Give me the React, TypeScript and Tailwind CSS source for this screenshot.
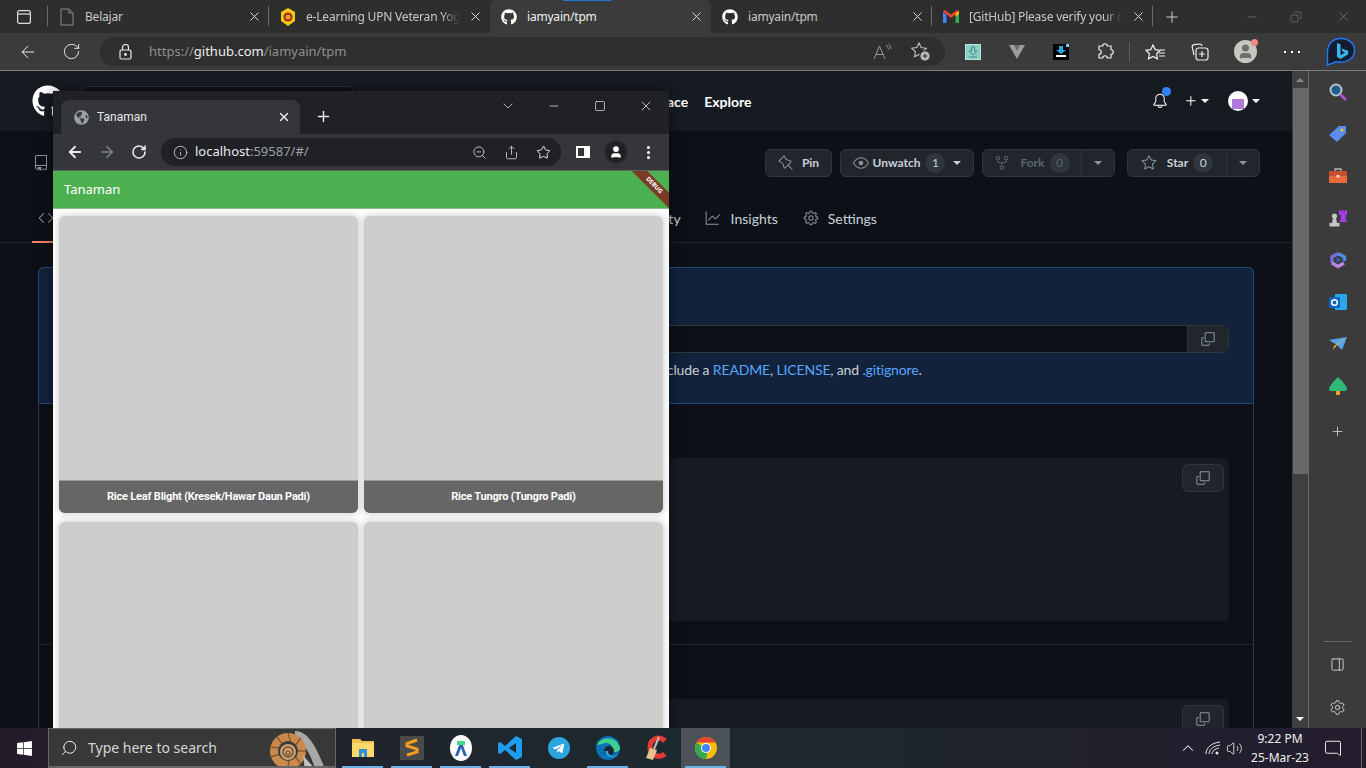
import type { ReactNode } from "react";
import {
  ArrowLeft,
  ArrowRight,
  ChevronDown,
  ChevronUp,
  Info,
  Minus,
  Plus,
  RotateCw,
  Search,
  Share,
  Square,
  Star,
  User,
  Volume2,
  X,
  ZoomOut,
  Settings as Cog,
  Copy,
  MessageSquare,
  PanelRight,
} from "lucide-react";
import { FaWindows, FaTelegramPlane, FaGithub, FaGlobeAmericas } from "react-icons/fa";
import {
  GoBell,
  GoCode,
  GoCopy,
  GoEye,
  GoGear,
  GoGraph,
  GoPin,
  GoPlus,
  GoRepo,
  GoRepoForked,
  GoStar,
} from "react-icons/go";

const STAR_PATH = "M8 1l2.2 4.6 5 .7-3.6 3.5.9 5L8 12.4 3.5 14.8l.9-5L.8 6.3l5-.7z";

function Caret({ className = "" }: { className?: string }) {
  return <span className={`inline-block w-0 h-0 border-x-[4px] border-x-transparent border-t-[4px] border-t-current ${className}`} />;
}

function GmailIcon() {
  return (
    <svg width="16" height="13" viewBox="0 0 16 13">
      <path d="M0 2v11h3.5V5z" fill="#4285f4" />
      <path d="M16 2v11h-3.5V5z" fill="#34a853" />
      <path d="M0 1.5 L8 8 L16 1.5 L14 0 L8 4.5 L2 0 Z" fill="#ea4335" />
      <path d="M12.5 3.5 L16 1 V4 L12.5 6.5z" fill="#fbbc04" />
    </svg>
  );
}

function UpnIcon() {
  return (
    <svg width="16" height="18" viewBox="0 0 16 18">
      <path d="M8 0 L15 4 V13 L8 18 L1 13 V4Z" fill="#f2c811" />
      <circle cx="8" cy="9" r="4.5" fill="#a3261f" />
      <circle cx="8" cy="9" r="2.5" fill="#d9a520" />
    </svg>
  );
}

function Tab({
  icon,
  title,
  active,
  fade,
  sep = true,
}: {
  icon: ReactNode;
  title: string;
  active?: boolean;
  fade?: boolean;
  sep?: boolean;
}) {
  return (
    <div className={`relative w-[221px] h-[33px] flex items-center pl-[11px] pr-[7px] ${active ? "bg-[#3b3b3b] rounded-t-md" : ""}`}>
      <span className="w-[16px] flex justify-center">{icon}</span>
      <span
        className={`ml-[10px] flex-1 overflow-hidden whitespace-nowrap text-[12px] tracking-[-0.2px] ${active ? "text-[#f0f0f0]" : "text-[#c8c8c8]"} ${
          fade ? "[mask-image:linear-gradient(to_right,black_88%,transparent)]" : ""
        }`}
      >
        {title}
      </span>
      <X size={15} strokeWidth={1.5} className="ml-2 text-[#e0e0e0]" />
      {sep && <span className="absolute right-0 top-[6px] h-[20px] w-px bg-[#6a6a6a]" />}
    </div>
  );
}

function TabStrip() {
  return (
    <div className="relative h-[33px] shrink-0 flex bg-[#2e2e2e]">
      <div className="w-[48px] flex items-center pl-[17px] relative">
        <svg width="14" height="14" viewBox="0 0 14 14" fill="none" stroke="#e0e0e0" strokeWidth="1.2">
          <rect x="0.6" y="0.6" width="12.8" height="12.8" rx="2" />
          <path d="M0.6 4h12.8" />
        </svg>
        <span className="absolute right-0 top-[6px] h-[20px] w-px bg-[#6a6a6a]" />
      </div>
      <Tab
        title="Belajar"
        icon={
          <svg width="14" height="18" viewBox="0 0 14 18" fill="none" stroke="#8a8a8a">
            <path d="M1 1h8l4 4v12H1z M9 1v4h4" />
          </svg>
        }
      />
      <Tab title="e-Learning UPN Veteran Yogyakarta" fade icon={<UpnIcon />} sep={false} />
      <Tab title="iamyain/tpm" active sep={false} icon={<FaGithub size={16} className="text-white" />} />
      <Tab title="iamyain/tpm" icon={<FaGithub size={16} className="text-white" />} />
      <Tab title="[GitHub] Please verify your device" fade icon={<GmailIcon />} />
      <div className="flex items-center pl-[10px] text-[#e0e0e0]">
        <Plus size={18} strokeWidth={1.2} />
      </div>
      <div className="flex-1 flex items-center justify-end text-[#8f8f8f]">
        <Minus size={14} strokeWidth={1} className="mr-[31px]" />
        <Copy size={12} strokeWidth={1} className="mr-[34px] -scale-x-100" />
        <X size={15} strokeWidth={1} className="mr-[15px]" />
      </div>
      <span className="absolute left-[563px] top-0 w-[48px] h-px bg-[#1e78d6]" />
    </div>
  );
}

function EdgeToolbar() {
  return (
    <div className="h-[38px] shrink-0 flex items-center bg-[#3b3b3b] border-b border-[#7d7d7d] text-[#ececec]">
      <div className="w-[100px] flex items-center pl-[18px] gap-[24px]">
        <ArrowLeft size={20} strokeWidth={1.2} />
        <RotateCw size={19} strokeWidth={1.2} />
      </div>
      <div className="w-[845px] h-[29px] rounded-full bg-[#2f2f2f] flex items-center pl-[19px] pr-[14px]">
        <svg width="13" height="16" viewBox="0 0 13 16" fill="none" stroke="#ececec" strokeWidth="1.2">
          <rect x="1" y="6" width="11" height="9" rx="1.5" />
          <path d="M3.5 6V3.5a3 3 0 0 1 6 0V6" />
          <circle cx="6.5" cy="10.5" r="0.8" fill="#ececec" />
        </svg>
        <span className="ml-[17px] flex-1 text-[13px] text-[#8f8f8f]">
          https://<span className="text-[#ececec]">github.com</span>/iamyain/tpm
        </span>
        <svg width="20" height="18" viewBox="0 0 20 18" fill="none" stroke="#9a9a9a" strokeWidth="1" className="mr-[18px]">
          <path d="M1 16 L6.5 3 L12 16 M3 11.5h7" />
          <path d="M13 2c1.5 1 2.5 2.5 2.5 4.5 M15.5 1c1.5 1 2.5 3 2.5 5" />
        </svg>
        <svg width="20" height="19" viewBox="0 0 20 19" fill="none" stroke="#c0c0c0" strokeWidth="1.1">
          <path d={STAR_PATH} />
          <circle cx="14" cy="14" r="5.2" fill="#c0c0c0" stroke="#2f2f2f" strokeWidth="1.2" />
          <path d="M14 11.5v5 M11.5 14h5" stroke="#2f2f2f" />
        </svg>
      </div>
      <div className="flex items-center">
        <span className="ml-[20px] w-[16px] h-[16px] bg-[#8ccfc0] border border-[#b6e3d8] flex items-center justify-center">
          <svg width="10" height="12" viewBox="0 0 10 12" fill="none" stroke="#3c8d99">
            <path d="M3.5 1h3v4H9L5 9 1 5h2.5z M1 11h8" />
          </svg>
        </span>
        <svg width="16" height="14" viewBox="0 0 16 14" className="ml-[28px]">
          <path d="M0 0h16L8 14z" fill="#9d9d9d" />
          <path d="M5 0h6L8 6z" fill="#6b6b6b" />
        </svg>
        <span className="relative ml-[28px] w-[16px] h-[16px] bg-black flex items-center justify-center">
          <svg width="10" height="12" viewBox="0 0 10 12">
            <path d="M3 0h4v4h3L5 8 0 4h3z" fill="#2fa8ea" />
            <path d="M0 9h10v2H0z" fill="#fff" />
          </svg>
          <span className="absolute right-0 top-0 w-[3px] h-[3px] bg-[#7cc8f8]" />
        </span>
        <svg width="18" height="18" viewBox="0 0 24 24" fill="none" stroke="#ececec" strokeWidth="1.6" className="ml-[27px]">
          <path d="M9 4a3 3 0 0 1 6 0h5v5a3 3 0 0 1 0 6v5h-5a3 3 0 0 0-6 0H4v-5a3 3 0 0 0 0-6V4z" />
        </svg>
        <span className="ml-[15px] w-px h-[20px] bg-[#5f5f5f]" />
        <svg width="20" height="16" viewBox="0 0 20 16" fill="none" stroke="#ececec" strokeWidth="1.2" className="ml-[15px]">
          <path d={STAR_PATH} />
          <path d="M15 6h5 M14 9h6 M14 12h6" />
        </svg>
        <svg width="18" height="18" viewBox="0 0 18 18" fill="none" stroke="#ececec" strokeWidth="1.2" className="ml-[26px]">
          <path d="M3 12 L1.2 4 Q1 2 3 1.6 L9 1 Q10.5 1 11 3" />
          <rect x="5" y="5" width="12" height="12" rx="2.5" />
          <path d="M11 8v6 M8 11h6" />
        </svg>
        <span className="relative ml-[25px] w-[23px] h-[23px] rounded-full overflow-visible bg-[#c9c6c0] flex items-center justify-center">
          <User size={17} className="text-[#6f6f6f]" fill="#6f6f6f" />
          <span className="absolute -right-[1px] -top-[1px] w-[7px] h-[7px] rounded-full bg-[#f08a80]" />
        </span>
        <span className="ml-[27px] w-[16px] flex justify-between">
          <i className="w-[2px] h-[2px] bg-white" />
          <i className="w-[2px] h-[2px] bg-white" />
          <i className="w-[2px] h-[2px] bg-white" />
        </span>
        <svg width="30" height="30" viewBox="0 0 30 30" fill="none" className="ml-[26px]">
          <path d="M15 1.5C7 1.5 1.5 7 1.5 15v13l8-3h5.5c8 0 13.5-5 13.5-11.5S23 1.5 15 1.5z" fill="#141c2e" stroke="#1e78ff" strokeWidth="1.4" />
          <path d="M11 6l3.5 1.2v11l4.5-2.6-2.4-1.2-1.2-3 6.8 2.4v3.4L14.5 22 11 20z" fill="#37b5f0" />
        </svg>
      </div>
    </div>
  );
}

function RepoButton({
  icon,
  label,
  count,
  split,
  dim,
  w,
  gap = "gap-[8px]",
  caret,
}: {
  icon: ReactNode;
  label: string;
  count?: string;
  split?: boolean;
  dim?: boolean;
  w: string;
  gap?: string;
  caret?: boolean;
}) {
  return (
    <div className={`h-[28px] ${w} flex items-center rounded-md border border-[#30363d] bg-[#21262d] text-[12px] font-bold ${dim ? "text-[#5c636b]" : "text-[#c9d1d9]"}`}>
      <div className="flex-1 flex items-center justify-center">
        <span className={`flex items-center ${gap}`}>
          {icon}
          <span>{label}</span>
        </span>
        {count && (
          <span className="ml-[5px] w-[20px] h-[20px] rounded-full bg-[#30363d] flex items-center justify-center font-normal">{count}</span>
        )}
        {caret && <Caret className="ml-[8px] text-[#c9d1d9]" />}
      </div>
      {split && (
        <div className="w-[33px] h-full border-l border-[#30363d] flex items-center justify-center text-[#8b949e]">
          <Caret />
        </div>
      )}
    </div>
  );
}

function GithubPage() {
  return (
    <div className="flex-1 min-w-0 bg-[#0d1117] font-[Lato,sans-serif]">
      <header className="h-[60px] bg-[#161b22] flex items-center pl-[32px] pr-[32px] text-white">
        <FaGithub size={32} />
        <div className="ml-[18px] w-[272px] h-[30px] rounded-md border border-[#30363d] bg-[#0d1117]" />
        <span className="ml-[313px] text-[14px] font-bold">ace</span>
        <span className="ml-[16px] text-[14px] font-bold">Explore</span>
        <div className="flex-1" />
        <span className="relative">
          <GoBell size={16} />
          <span className="absolute -top-[6px] right-[-3px] w-[9px] h-[9px] rounded-full bg-[#2f81f7]" />
        </span>
        <GoPlus size={16} className="ml-[15px]" />
        <Caret className="ml-[2px]" />
        <span className="ml-[19px] w-[20px] h-[20px] rounded-full bg-white flex items-end justify-center pb-[2px]">
          <span className="w-[12px] h-[10px] bg-[#b07ad8]" />
        </span>
        <Caret className="ml-[4px]" />
      </header>

      <div className="h-[112px] border-b border-[#21262d] relative">
        <div className="flex items-center h-[60px] pl-[33px] pr-[32px] pt-[4px]">
          <GoRepo size={16} className="text-[#8b949e]" />
          <div className="flex-1" />
          <div className="flex items-center gap-[8px]">
            <RepoButton w="w-[67px]" icon={<GoPin size={16} className="text-[#8b949e]" />} label="Pin" />
            <RepoButton w="w-[134px]" gap="gap-[4px]" caret icon={<GoEye size={16} className="text-[#8b949e]" />} label="Unwatch" count="1" />
            <RepoButton w="w-[133px]" gap="gap-[10px]" dim split icon={<GoRepoForked size={16} />} label="Fork" count="0" />
            <div className="ml-[4px]">
              <RepoButton w="w-[133px]" gap="gap-[10px]" split icon={<GoStar size={16} className="text-[#8b949e]" />} label="Star" count="0" />
            </div>
          </div>
        </div>
        <div className="flex items-center h-[32px] mt-[11px] text-[14px] text-[#c9d1d9]">
          <GoCode size={16} className="ml-[38px] text-[#8b949e]" />
          <span className="ml-[611px]">ity</span>
          <GoGraph size={16} className="ml-[24px] text-[#8b949e]" />
          <span className="ml-[10px]">Insights</span>
          <GoGear size={16} className="ml-[25px] text-[#8b949e]" />
          <span className="ml-[9px]">Settings</span>
        </div>
        <span className="absolute left-[32px] bottom-[-1px] w-[30px] h-[2px] bg-[#f78166]" />
      </div>

      <div className="mx-[38px] mt-[24px] border-x border-[#30363d] rounded-t-md">
        <section className="h-[137px] bg-[#12223a] border border-[#1f4a7d] -mx-px rounded-t-md pt-[57px] pr-[24px] pl-[600px]">
          <div className="h-[28px] flex border border-[#30363d] rounded-md bg-[#0d1117]">
            <div className="flex-1" />
            <div className="w-[41px] bg-[#21262d] border-l border-[#30363d] rounded-r-md flex items-center justify-center text-[#8b949e]">
              <GoCopy size={16} />
            </div>
          </div>
          <p className="mt-[6px] ml-[17px] text-[14px] tracking-[-0.15px] text-[#c9d1d9] whitespace-nowrap">
            include a <span className="text-[#58a6ff]">README</span>, <span className="text-[#58a6ff]">LICENSE</span>, and{" "}
            <span className="text-[#58a6ff]">.gitignore</span>.
          </p>
        </section>

        <section className="h-[241px] border-b border-[#21262d] pt-[54px] pr-[24px] pl-[600px]">
          <div className="h-[163px] bg-[#161b22] rounded-md pt-[6px] pr-[5px] flex justify-end">
            <CopyBox />
          </div>
        </section>

        <section className="pt-[54px] pr-[24px] pl-[600px]">
          <div className="h-[60px] bg-[#161b22] rounded-md pt-[6px] pr-[5px] flex justify-end">
            <CopyBox />
          </div>
        </section>
      </div>
    </div>
  );
}

function CopyBox() {
  return (
    <div className="w-[42px] h-[28px] rounded-md border border-[#30363d] bg-[#21262d] flex items-center justify-center text-[#8b949e]">
      <GoCopy size={16} />
    </div>
  );
}

function Scrollbar() {
  return (
    <div className="w-[17px] bg-[#3f3f3f] border-r border-[#6a6a6a] flex flex-col items-center">
      <div className="h-[17px] flex items-center justify-center text-[#8a8a8a]">
        <Caret className="rotate-180" />
      </div>
      <div className="w-[15px] h-[386px] bg-[#686868]" />
      <div className="flex-1" />
      <div className="h-[18px] flex items-center justify-center text-white">
        <Caret />
      </div>
    </div>
  );
}

function SidebarIcon({ children }: { children: ReactNode }) {
  return <div className="h-[42px] flex items-center justify-center">{children}</div>;
}

function EdgeSidebar() {
  return (
    <div className="w-[57px] bg-[#3b3b3b] flex flex-col">
      <div>
        <SidebarIcon>
          <svg width="18" height="18" viewBox="0 0 18 18" fill="none">
            <circle cx="7" cy="7" r="5.5" fill="#1d5f8a" stroke="#b8c4cc" strokeWidth="2" />
            <path d="M11.5 11.5 L17 17" stroke="#c050d8" strokeWidth="2.5" />
          </svg>
        </SidebarIcon>
        <SidebarIcon>
          <svg width="18" height="18" viewBox="0 0 18 18">
            <path d="M0 10 L10 1 H17 V8 L8 17z" fill="#5a8cf0" />
            <circle cx="13" cy="5" r="1.6" fill="#f5c518" />
          </svg>
        </SidebarIcon>
        <SidebarIcon>
          <svg width="18" height="16" viewBox="0 0 18 16">
            <path d="M6 3V1h6v2" fill="none" stroke="#b8b8b8" strokeWidth="1.3" />
            <rect y="3" width="18" height="5" fill="#c8502e" />
            <rect y="8" width="18" height="7" fill="#e8693a" />
            <rect x="7.5" y="7" width="3" height="2.5" fill="#dedede" />
          </svg>
        </SidebarIcon>
        <SidebarIcon>
          <svg width="18" height="18" viewBox="0 0 18 18">
            <circle cx="5.5" cy="7" r="2.6" fill="#c4c4c4" />
            <path d="M4 9h3l1 5H3z M0.5 14h10v3.5H0.5z" fill="#c4c4c4" />
            <path d="M10 1h1.6v1.6h1.5V1h1.6v1.6h1.5V1H18v5h-1.5l.5 6H19v1H10v-1h1.5l.5-6h-2z" fill="#a83cf0" />
          </svg>
        </SidebarIcon>
        <SidebarIcon>
          <svg width="18" height="18" viewBox="0 0 18 18" fill="none" strokeWidth="3.4">
            <path d="M3 12 V6 L9 2.5" stroke="#7a6cd8" />
            <path d="M9 2.5 L15.5 6 V10" stroke="#4a8fe0" />
            <path d="M15 12 L9 15.5 L3 12" stroke="#b58ae0" />
            <path d="M7.5 6.5 L12.5 9 L7.5 11.5z" fill="#3f5fc8" stroke="none" />
          </svg>
        </SidebarIcon>
        <SidebarIcon>
          <svg width="18" height="18" viewBox="0 0 18 18">
            <rect x="6" y="1" width="12" height="16" rx="1" fill="#28a8ea" />
            <rect x="0" y="4" width="11" height="11" rx="1" fill="#0a66c2" />
            <circle cx="5.5" cy="9.5" r="2.8" fill="none" stroke="#fff" strokeWidth="1.5" />
          </svg>
        </SidebarIcon>
        <SidebarIcon>
          <svg width="18" height="14" viewBox="0 0 18 14">
            <path d="M0 3 L18 0 L13 13 L8 8z" fill="#54a6e8" />
            <path d="M18 0 L5 9 L4 13 L8 8z" fill="#f0b429" />
          </svg>
        </SidebarIcon>
        <SidebarIcon>
          <svg width="18" height="18" viewBox="0 0 18 18">
            <path d="M9 0 C12 3 18 9 18 12 Q18 14 15 14 H3 Q0 14 0 12 C0 9 6 3 9 0z" fill="#2fb878" />
            <rect x="7" y="14" width="4" height="4" fill="#f0a020" />
          </svg>
        </SidebarIcon>
        <div className="h-[48px] flex items-center justify-center text-[#e0e0e0]">
          <Plus size={15} strokeWidth={1.2} />
        </div>
      </div>
      <div className="flex-1" />
      <div className="mx-[14px] h-px bg-[#666]" />
      <div className="h-[44px] flex items-center justify-center text-[#e6e6e6]">
        <PanelRight size={15} strokeWidth={1.3} className="mt-[1px]" />
      </div>
      <div className="h-[42px] flex items-center justify-center text-[#e6e6e6]">
        <Cog size={17} strokeWidth={1.2} />
      </div>
    </div>
  );
}

function MiniTile({ title }: { title?: string }) {
  return (
    <div className="h-[297px] rounded-[6px] bg-[#cdcdcd] shadow-[0_0_6px_2px_rgba(0,0,0,0.14)] overflow-hidden flex flex-col">
      <div className="flex-1" />
      {title && (
        <div className="h-[33px] bg-[#666666] border-t border-[#9a9a9a] flex items-center justify-center text-[11px] font-bold text-white tracking-[-0.2px]">
          {title}
        </div>
      )}
    </div>
  );
}

function ChromeWindow() {
  return (
    <div className="absolute left-[53px] top-[20px] w-[616px] h-[660px] flex flex-col font-['Noto_Sans',sans-serif] shadow-[0_0_12px_rgba(0,0,0,0.5)]">
      <div className="h-[43px] shrink-0 bg-[#202124] flex text-[#e8eaed]">
        <div className="self-end ml-[8px] w-[239px] h-[34px] bg-[#35363a] rounded-t-lg flex items-center pl-[13px] pr-[9px]">
          <FaGlobeAmericas size={15} className="text-[#9aa0a6]" />
          <span className="ml-[8px] flex-1 text-[12px] font-[Roboto,sans-serif]">Tanaman</span>
          <X size={14} strokeWidth={2.5} />
        </div>
        <Plus size={17} strokeWidth={2} className="self-end ml-[15px] mb-[9px]" />
        <div className="flex-1" />
        <div className="flex items-center h-[29px]">
          <span className="w-[46px] flex justify-center"><ChevronDown size={16} strokeWidth={1.1} /></span>
          <span className="w-[46px] flex justify-center"><Minus size={14} strokeWidth={1.2} /></span>
          <span className="w-[46px] flex justify-center"><Square size={12} strokeWidth={1.4} /></span>
          <span className="w-[46px] flex justify-center"><X size={16} strokeWidth={1.2} /></span>
        </div>
      </div>
      <div className="h-[37px] shrink-0 bg-[#35363a] flex items-center border-b border-[#5f6368] text-[#e8eaed]">
        <ArrowLeft size={18} strokeWidth={2.4} className="ml-[13px]" />
        <ArrowRight size={18} strokeWidth={2} className="ml-[14px] text-[#80868b]" />
        <RotateCw size={16} strokeWidth={2.4} className="ml-[15px]" />
        <div className="ml-[14px] w-[400px] h-[28px] rounded-full bg-[#202124] flex items-center pl-[12px] pr-[10px]">
          <Info size={15} strokeWidth={1.5} className="text-[#bdc1c6]" />
          <span className="ml-[7px] flex-1 text-[13px] text-[#9aa0a6]">
            <span className="text-[#e8eaed]">localhost</span>:59587/#/
          </span>
          <ZoomOut size={15} strokeWidth={1.5} className="text-[#bdc1c6]" />
          <Share size={15} strokeWidth={1.5} className="ml-[17px] text-[#bdc1c6]" />
          <Star size={15} strokeWidth={1.6} className="ml-[17px]" />
        </div>
        <span className="ml-[15px] w-[14px] h-[12px] border-2 border-white border-r-[6px]" />
        <span className="ml-[15px] w-[22px] h-[22px] rounded-full bg-[#202124] flex items-center justify-center">
          <User size={14} fill="white" className="text-white" />
        </span>
        <span className="ml-[20px] flex flex-col gap-[2px]">
          <i className="w-[3px] h-[3px] rounded-full bg-white" />
          <i className="w-[3px] h-[3px] rounded-full bg-white" />
          <i className="w-[3px] h-[3px] rounded-full bg-white" />
        </span>
      </div>
      <div className="relative h-[38px] shrink-0 bg-[#4caf50] border-b border-[#8fb590] flex items-center pl-[11px] pt-[1px] text-[13px] text-white overflow-hidden">
        Tanaman
        <div className="absolute right-[-25px] top-[9px] w-[80px] h-[11px] bg-[#7a3b26] rotate-45 flex items-center justify-center text-[6px] font-bold text-white">
          DEBUG
        </div>
      </div>
      <div className="flex-1 min-h-0 overflow-hidden bg-white px-[6px] pt-[7px] grid grid-cols-2 gap-x-[6px] gap-y-[9px] content-start font-[Roboto,sans-serif]">
        <MiniTile title="Rice Leaf Blight (Kresek/Hawar Daun Padi)" />
        <MiniTile title="Rice Tungro (Tungro Padi)" />
        <MiniTile />
        <MiniTile />
      </div>
    </div>
  );
}

function Shell() {
  return (
    <svg width="62" height="40" viewBox="0 0 62 40" fill="none" className="absolute left-[216px] top-0">
      <path d="M30 2 C44 2 52 20 60 40 H50 C46 26 40 14 30 12z" fill="#a8a8a8" />
      <circle cx="23" cy="22" r="18" fill="#c98a4b" />
      <path d="M23 4 L26 14 M36 9 L30 17 M41 22 L32 22 M36 35 L30 27 M23 40 L24 30 M6 28 L15 25 M5 18 L14 19 M12 8 L18 16" stroke="#8a5a2c" strokeWidth="1.4" />
      <circle cx="23" cy="22" r="10" fill="#3a3a3a" />
      <circle cx="23" cy="23" r="8" fill="#c9a070" />
      <circle cx="23" cy="23" r="5" stroke="#6f5030" strokeWidth="1.4" />
      <circle cx="23" cy="24" r="2" stroke="#6f5030" strokeWidth="1.2" />
      <path d="M40 40 C38 32 40 28 36 24 L50 40z" fill="#c0c0c0" />
    </svg>
  );
}

function TaskIcon({ children, line, active, w = "w-[49px]" }: { children: ReactNode; line?: boolean; active?: boolean; w?: string }) {
  return (
    <div className={`relative ${w} h-[40px] flex items-center justify-center ${active ? "bg-[#4c5257]" : ""}`}>
      {children}
      {line && <span className="absolute bottom-0 left-[4px] right-[4px] h-[2px] bg-[#6cb0e8]" />}
    </div>
  );
}

function Taskbar() {
  return (
    <div className="h-[40px] shrink-0 flex items-stretch bg-gradient-to-r from-[#231c2b] via-[#1c2a2f] to-[#231c2d] text-white font-['Noto_Sans',sans-serif]">
      <div className="w-[48px] flex items-center justify-center">
        <FaWindows size={17} />
      </div>
      <div className="relative w-[288px] bg-[#383838] border border-[#666] border-b-2 flex items-center pl-[11px] overflow-hidden">
        <Search size={18} strokeWidth={1.2} className="-scale-x-100" />
        <span className="ml-[10px] text-[14px] text-[#d6d6d6]">Type here to search</span>
        <Shell />
      </div>
      <div className="ml-[2px] flex items-stretch">
        <TaskIcon line>
          <svg width="22" height="20" viewBox="0 0 22 20">
            <path d="M0 1h8l2 2h12v16H0z" fill="#f3c14b" />
            <path d="M0 5h22v14H0z" fill="#fbd96b" />
            <path d="M7 11h8v8H7z" fill="#2f8fd8" />
            <path d="M10 15h2v4h-2z" fill="#fbd96b" />
          </svg>
        </TaskIcon>
        <TaskIcon line>
          <svg width="24" height="24" viewBox="0 0 24 24" fill="none">
            <rect width="24" height="24" fill="#4a4a4a" />
            <path d="M17 6 L7 9.5 V12 L17 15 V18 L7 21" stroke="#f59e1b" strokeWidth="3" transform="translate(0 -2)" />
          </svg>
        </TaskIcon>
        <TaskIcon line>
          <svg width="22" height="26" viewBox="0 0 22 26">
            <ellipse cx="11" cy="13" rx="11" ry="13" fill="white" />
            <path d="M11 5 L17 21 H14 L11 13 L8 21 H5z" fill="#2c5fb3" />
            <path d="M7 6h8v4H7z" fill="#3ddc84" />
          </svg>
        </TaskIcon>
        <TaskIcon line>
          <svg width="24" height="24" viewBox="0 0 24 24">
            <path d="M18 0 L24 3 V21 L18 24 L7 14 L2 18 L0 17 V7 L2 6 L7 10z M18 7 L11 12 L18 17z" fill="#1f9cf0" fillRule="evenodd" />
          </svg>
        </TaskIcon>
        <TaskIcon>
          <span className="w-[22px] h-[22px] rounded-full bg-[#2ca5e0] flex items-center justify-center">
            <FaTelegramPlane size={13} className="text-white" />
          </span>
        </TaskIcon>
        <TaskIcon line>
          <svg width="24" height="24" viewBox="0 0 24 24">
            <circle cx="12" cy="12" r="12" fill="#0c6fb8" />
            <path d="M1 9 C4 1 20 -2 24 12 C24 16 18 17 14 15 C20 10 12 5 6 8z" fill="#3ecf8e" />
            <circle cx="13" cy="15" r="5" fill="#1c2a2f" />
            <path d="M9 15 C9 21 16 23 22 19 C16 21 12 19 12 15z" fill="#29a3e0" />
          </svg>
        </TaskIcon>
        <TaskIcon>
          <svg width="24" height="26" viewBox="0 0 24 26" fill="none">
            <path d="M20 6 C14 0 5 4 5 12 C5 20 14 24 20 19" stroke="#e53935" strokeWidth="5" />
            <path d="M14 2 L9 14" stroke="#c0c0c0" strokeWidth="2" />
            <path d="M5 13 L12 15 L8 25 L1 23z" fill="#e8c090" />
          </svg>
        </TaskIcon>
        <TaskIcon line active>
          <svg width="24" height="24" viewBox="0 0 24 24">
            <circle cx="12" cy="12" r="11" fill="#fbbc04" />
            <path d="M2.47 6.5 A11 11 0 0 1 21.53 6.5 L12 6.5z" fill="#ea4335" />
            <path d="M2.47 6.5 A11 11 0 0 0 12 23 L14 14z" fill="#34a853" />
            <circle cx="12" cy="12" r="5" fill="white" />
            <circle cx="12" cy="12" r="4" fill="#4285f4" />
          </svg>
        </TaskIcon>
      </div>
      <div className="flex-1" />
      <div className="flex items-center text-[#f0f0f0]">
        <ChevronUp size={18} strokeWidth={1.4} />
        <svg width="16" height="14" viewBox="0 0 16 14" fill="none" stroke="#e8e8e8" className="ml-[8px]">
          <path d="M1 13C1 7 6 2 15 1 M4 13C4 9 8 5 15 4 M7 13C7 10 10 8 14 7" />
          <circle cx="12" cy="12" r="1.5" fill="#e8e8e8" stroke="none" />
        </svg>
        <Volume2 size={17} strokeWidth={1.2} className="ml-[5px]" />
        <div className="w-[70px] ml-[2px] flex flex-col items-center text-[12px] leading-[19px]">
          <span>9:22 PM</span>
          <span>25-Mar-23</span>
        </div>
        <MessageSquare size={18} strokeWidth={1.3} className="ml-[9px] -scale-x-100" />
        <span className="ml-[19px] mr-[4px] w-px h-[40px] bg-[#666]" />
      </div>
    </div>
  );
}

export default function App() {
  return (
    <div className="w-[1366px] h-[768px] overflow-hidden flex flex-col bg-[#3b3b3b] font-['Noto_Sans',sans-serif]">
      <TabStrip />
      <EdgeToolbar />
      <main className="relative flex-1 min-h-0 flex overflow-hidden">
        <GithubPage />
        <Scrollbar />
        <EdgeSidebar />
        <ChromeWindow />
      </main>
      <Taskbar />
    </div>
  );
}
